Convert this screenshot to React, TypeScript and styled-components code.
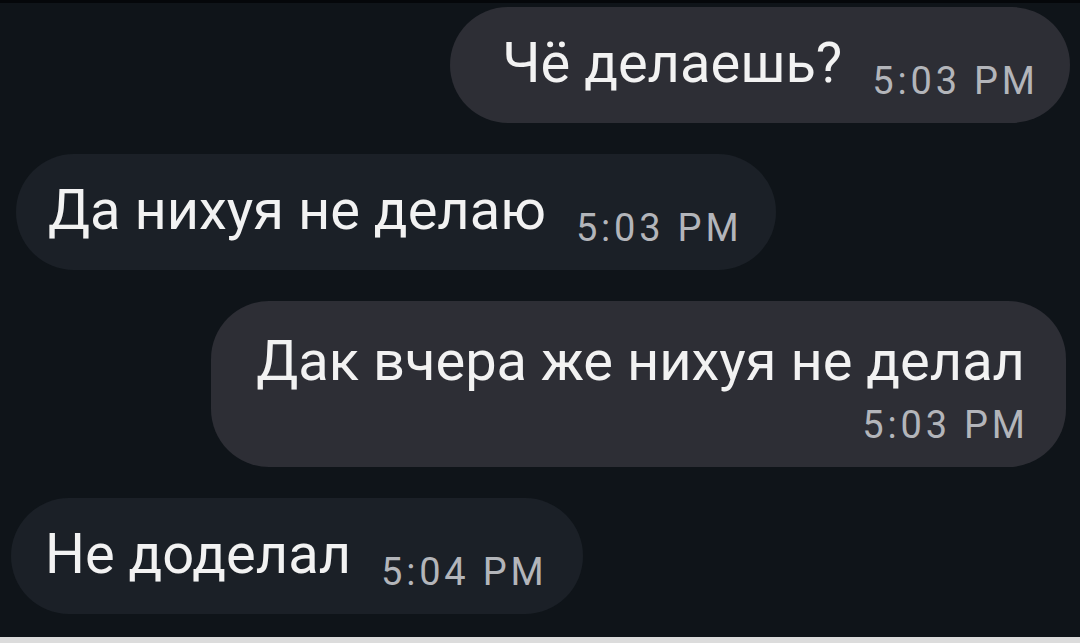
import React from "react";
import styled, { createGlobalStyle } from "styled-components";

const Global = createGlobalStyle`
  html, body {
    margin: 0;
    padding: 0;
    background: #0f1419;
  }
  body {
    font-family: Roboto, "Noto Sans", "Liberation Sans", sans-serif;
  }
`;

const Screen = styled.div`
  width: 1080px;
  height: 643px;
  box-sizing: border-box;
  background: #0f1419;
  border-top: 3px solid #05070a;
  border-bottom: 6px solid #dcdcdc;
  display: flex;
  flex-direction: column;
  overflow: hidden;
`;

const Thread = styled.div`
  flex: 1;
  display: flex;
  flex-direction: column;
  padding: 4px 0 0 0;
  gap: 31px;
`;

const Row = styled.div<{ $out?: boolean; $edge: number }>`
  display: flex;
  justify-content: ${(p) => (p.$out ? "flex-end" : "flex-start")};
  padding: ${(p) => (p.$out ? `0 ${p.$edge}px 0 0` : `0 0 0 ${p.$edge}px`)};
`;

const Bubble = styled.div<{ $out?: boolean; $stacked?: boolean; $padL: number; $padR: number }>`
  box-sizing: border-box;
  display: flex;
  flex-direction: ${(p) => (p.$stacked ? "column" : "row")};
  align-items: ${(p) => (p.$stacked ? "flex-end" : "baseline")};
  gap: ${(p) => (p.$stacked ? "12px" : "30px")};
  height: ${(p) => (p.$stacked ? "166px" : "116px")};
  padding: ${(p) => (p.$stacked ? "28px" : "24px")} ${(p) => p.$padR}px 0
    ${(p) => p.$padL}px;
  background: ${(p) => (p.$out ? "#2d2e35" : "#1b2027")};
  border-radius: 58px;
`;

const Text = styled.span`
  font-size: 56px;
  line-height: 64px;
  color: #f2f2f2;
  white-space: nowrap;
`;

const Time = styled.span<{ $stacked?: boolean }>`
  font-size: 38px;
  line-height: 40px;
  letter-spacing: 3.8px;
  margin-right: -3.8px;
  color: #b3b5ba;
  white-space: nowrap;
  position: relative;
  top: ${(p) => (p.$stacked ? "0" : "12px")};
`;

type Msg = {
  text: string;
  time: string;
  out?: boolean;
  stacked?: boolean;
  padL: number;
  padR: number;
  edge: number;
};

const messages: Msg[] = [
  { text: "Чё делаешь?", time: "5:03 PM", out: true, padL: 52, padR: 35, edge: 10 },
  { text: "Да нихуя не делаю", time: "5:03 PM", padL: 32, padR: 37, edge: 16 },
  { text: "Дак вчера же нихуя не делал", time: "5:03 PM", out: true, stacked: true, padL: 45, padR: 41, edge: 14 },
  { text: "Не доделал", time: "5:04 PM", padL: 34, padR: 39, edge: 11 },
];

export default function App() {
  return (
    <>
      <Global />
      <Screen>
        <Thread>
          {messages.map((m, i) => (
            <Row key={i} $out={m.out} $edge={m.edge}>
              <Bubble $out={m.out} $stacked={m.stacked} $padL={m.padL} $padR={m.padR}>
                <Text>{m.text}</Text>
                <Time $stacked={m.stacked}>{m.time}</Time>
              </Bubble>
            </Row>
          ))}
        </Thread>
      </Screen>
    </>
  );
}
